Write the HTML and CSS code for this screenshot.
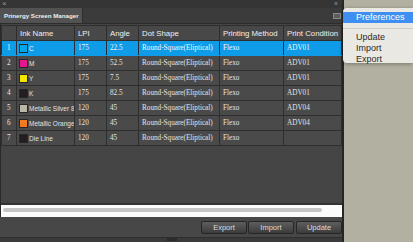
FILE: index.html
```html
<!DOCTYPE html>
<html lang="en">
<head>
    <meta charset="UTF-8">
    <title>Prinergy Screen Manager</title>
    <link rel="stylesheet" href="styles.css">
</head>
<body>
    <div class="panel">
        <div class="title-strip">
            <span class="close">×</span>
            <span class="collapse">«</span>
        </div>
        <div class="tab-bar">
            <div class="tab">Prinergy Screen Manager</div>
            <div class="menu-btn"><span></span></div>
        </div>

        <div class="table-area">
            <table class="grid">
                <colgroup>
                    <col style="width:15px">
                    <col style="width:58px">
                    <col style="width:32px">
                    <col style="width:32px">
                    <col style="width:81px">
                    <col style="width:64px">
                    <col>
                </colgroup>
                <thead>
                    <tr>
                        <th></th>
                        <th>Ink Name</th>
                        <th>LPI</th>
                        <th>Angle</th>
                        <th>Dot Shape</th>
                        <th>Printing Method</th>
                        <th>Print Condition</th>
                    </tr>
                </thead>
                <tbody id="rows"></tbody>
            </table>

            <div class="hscroll"><div class="thumb"></div></div>
        </div>

        <div class="button-bar">
            <button>Export</button>
            <button>Import</button>
            <button class="last">Update</button>
        </div>
        <div class="bottom-strip"><span class="grip"></span></div>
    </div>

    <div class="flyout">
        <div class="item active">Preferences</div>
        <div class="sep"></div>
        <div class="item">Update</div>
        <div class="item">Import</div>
        <div class="item">Export</div>
    </div>

    <script>
        const inks = [
            ['C', '#00a8e8', '175', '22.5', 'ADV01'],
            ['M', '#e8168c', '175', '52.5', 'ADV01'],
            ['Y', '#f5e800', '175', '7.5', 'ADV01'],
            ['K', '#231f20', '175', '82.5', 'ADV01'],
            ['Metallic Silver 8', '#b9b7a8', '120', '45', 'ADV04'],
            ['Metallic Orange', '#f47a1f', '120', '45', 'ADV04'],
            ['Die Line', '#231f20', '120', '45', '']
        ];

        const rows = document.getElementById('rows');

        inks.forEach((ink, index) => {
            const tr = document.createElement('tr');
            if (index === 0) tr.classList.add('selected');
            tr.innerHTML = `
                <td class="num">${index + 1}</td>
                <td class="name"><span class="swatch" style="background:${ink[1]}"></span>${ink[0]}</td>
                <td>${ink[2]}</td>
                <td>${ink[3]}</td>
                <td>Round-Square(Eliptical)</td>
                <td>Flexo</td>
                <td>${ink[4]}</td>
            `;
            rows.appendChild(tr);
        });
    </script>
</body>
</html>
```

FILE: styles.css
```css
body {
    margin: 0;
    width: 413px;
    height: 242px;
    overflow: hidden;
    background: #b2b1a1;
    font-family: "Liberation Sans", Arial, sans-serif;
    position: relative;
}
.panel {
    width: 342px;
    height: 242px;
    border-right: 2px solid #262626;
    background: #454545;
    display: flex;
    flex-direction: column;
}
.title-strip {
    height: 8px;
    background: #353535;
    display: flex;
    justify-content: space-between;
    align-items: center;
    padding: 0 4px 0 2px;
    color: #9a9a9a;
    font-size: 8px;
    line-height: 8px;
}
.title-strip .collapse {
    font-size: 7px;
}
.tab-bar {
    height: 15px;
    background: #3b3b3b;
    border-bottom: 1px solid #2c2c2c;
    display: flex;
    justify-content: space-between;
    align-items: center;
}
.tab {
    width: 74px;
    height: 15px;
    line-height: 15px;
    padding: 0 4px;
    background: #525252;
    color: #ededed;
    font-size: 6.2px;
    font-weight: bold;
    white-space: nowrap;
    border-right: 1px solid #2e2e2e;
}
.menu-btn {
    width: 6px;
    height: 4px;
    margin-right: 1px;
    border: 1px solid #8a8a8a;
    background: #5e5e5e;
}
.table-area {
    flex: 1;
    border-left: 1px solid #2a2a2a;
    padding-top: 1px;
    background: #454545;
    display: flex;
    flex-direction: column;
}
.grid {
    width: 341px;
    border-collapse: collapse;
    table-layout: fixed;
}
.grid th,
.grid td {
    height: 14px;
    padding: 0 0 0 3px;
    border: 1px solid #2e2e2e;
    text-align: left;
    white-space: nowrap;
    overflow: hidden;
    color: #e2e2e2;
    background: #4a4a4a;
}
.grid th {
    font-family: "Liberation Sans", Arial, sans-serif;
    font-weight: normal;
    font-size: 7.8px;
    color: #f0f0f0;
    background: #484848;
}
.grid td {
    font-family: "Liberation Serif", "Times New Roman", serif;
    font-size: 7.2px;
}
.grid td.num {
    padding-left: 5px;
}
.grid td.name {
    padding-left: 2px;
    font-family: "Liberation Sans", Arial, sans-serif;
    font-size: 6.5px;
}
.swatch {
    display: inline-block;
    width: 7px;
    height: 7px;
    border: 1px solid #262626;
    vertical-align: -2px;
    margin-right: 1px;
}
.grid tr.selected td {
    background: #0e9be8;
    border-top-color: #0e9be8;
    border-bottom-color: #0e9be8;
    color: #f4f8ff;
}
.hscroll {
    margin-top: auto;
    height: 9px;
    border-top: 2px solid #333;
    background: #fbfbfb;
    padding: 3px 20px 0 2px;
}
.thumb {
    height: 4px;
    border-radius: 2px;
    background: #c6c6c6;
}
.button-bar {
    height: 20px;
    background: #474747;
    display: flex;
    justify-content: flex-end;
    align-items: center;
    gap: 1px;
}
button {
    width: 46px;
    height: 13px;
    padding: 0;
    font-family: "Liberation Sans", Arial, sans-serif;
    font-size: 7.5px;
    color: #dcdcdc;
    background: linear-gradient(#5e5e5e, #3c3c3c);
    border: 1px solid #262626;
    border-radius: 2px;
}
button.last {
    margin-left: 1px;
}
.bottom-strip {
    height: 4px;
    background: #3a3a3a;
    border-top: 1px solid #2e2e2e;
    padding-left: 167px;
}
.grip {
    display: block;
    width: 10px;
    height: 3px;
    background: #2c2c2c;
}
.flyout {
    position: absolute;
    left: 343px;
    top: 8px;
    width: 70px;
    height: 55px;
    padding-top: 4px;
    box-sizing: border-box;
    background: #e9e8e3;
    border-radius: 4px 0 0 4px;
    box-shadow: 0 1px 4px rgba(0, 0, 0, 0.35);
    font-size: 9px;
    color: #2a2a2a;
}
.flyout .item {
    height: 11px;
    line-height: 11px;
    padding-left: 13px;
}
.flyout .item.active {
    background: #3f8ff2;
    color: #fff;
}
.flyout .sep {
    height: 1px;
    background: #cfcdc6;
    margin: 5px 0 3px;
}
```
